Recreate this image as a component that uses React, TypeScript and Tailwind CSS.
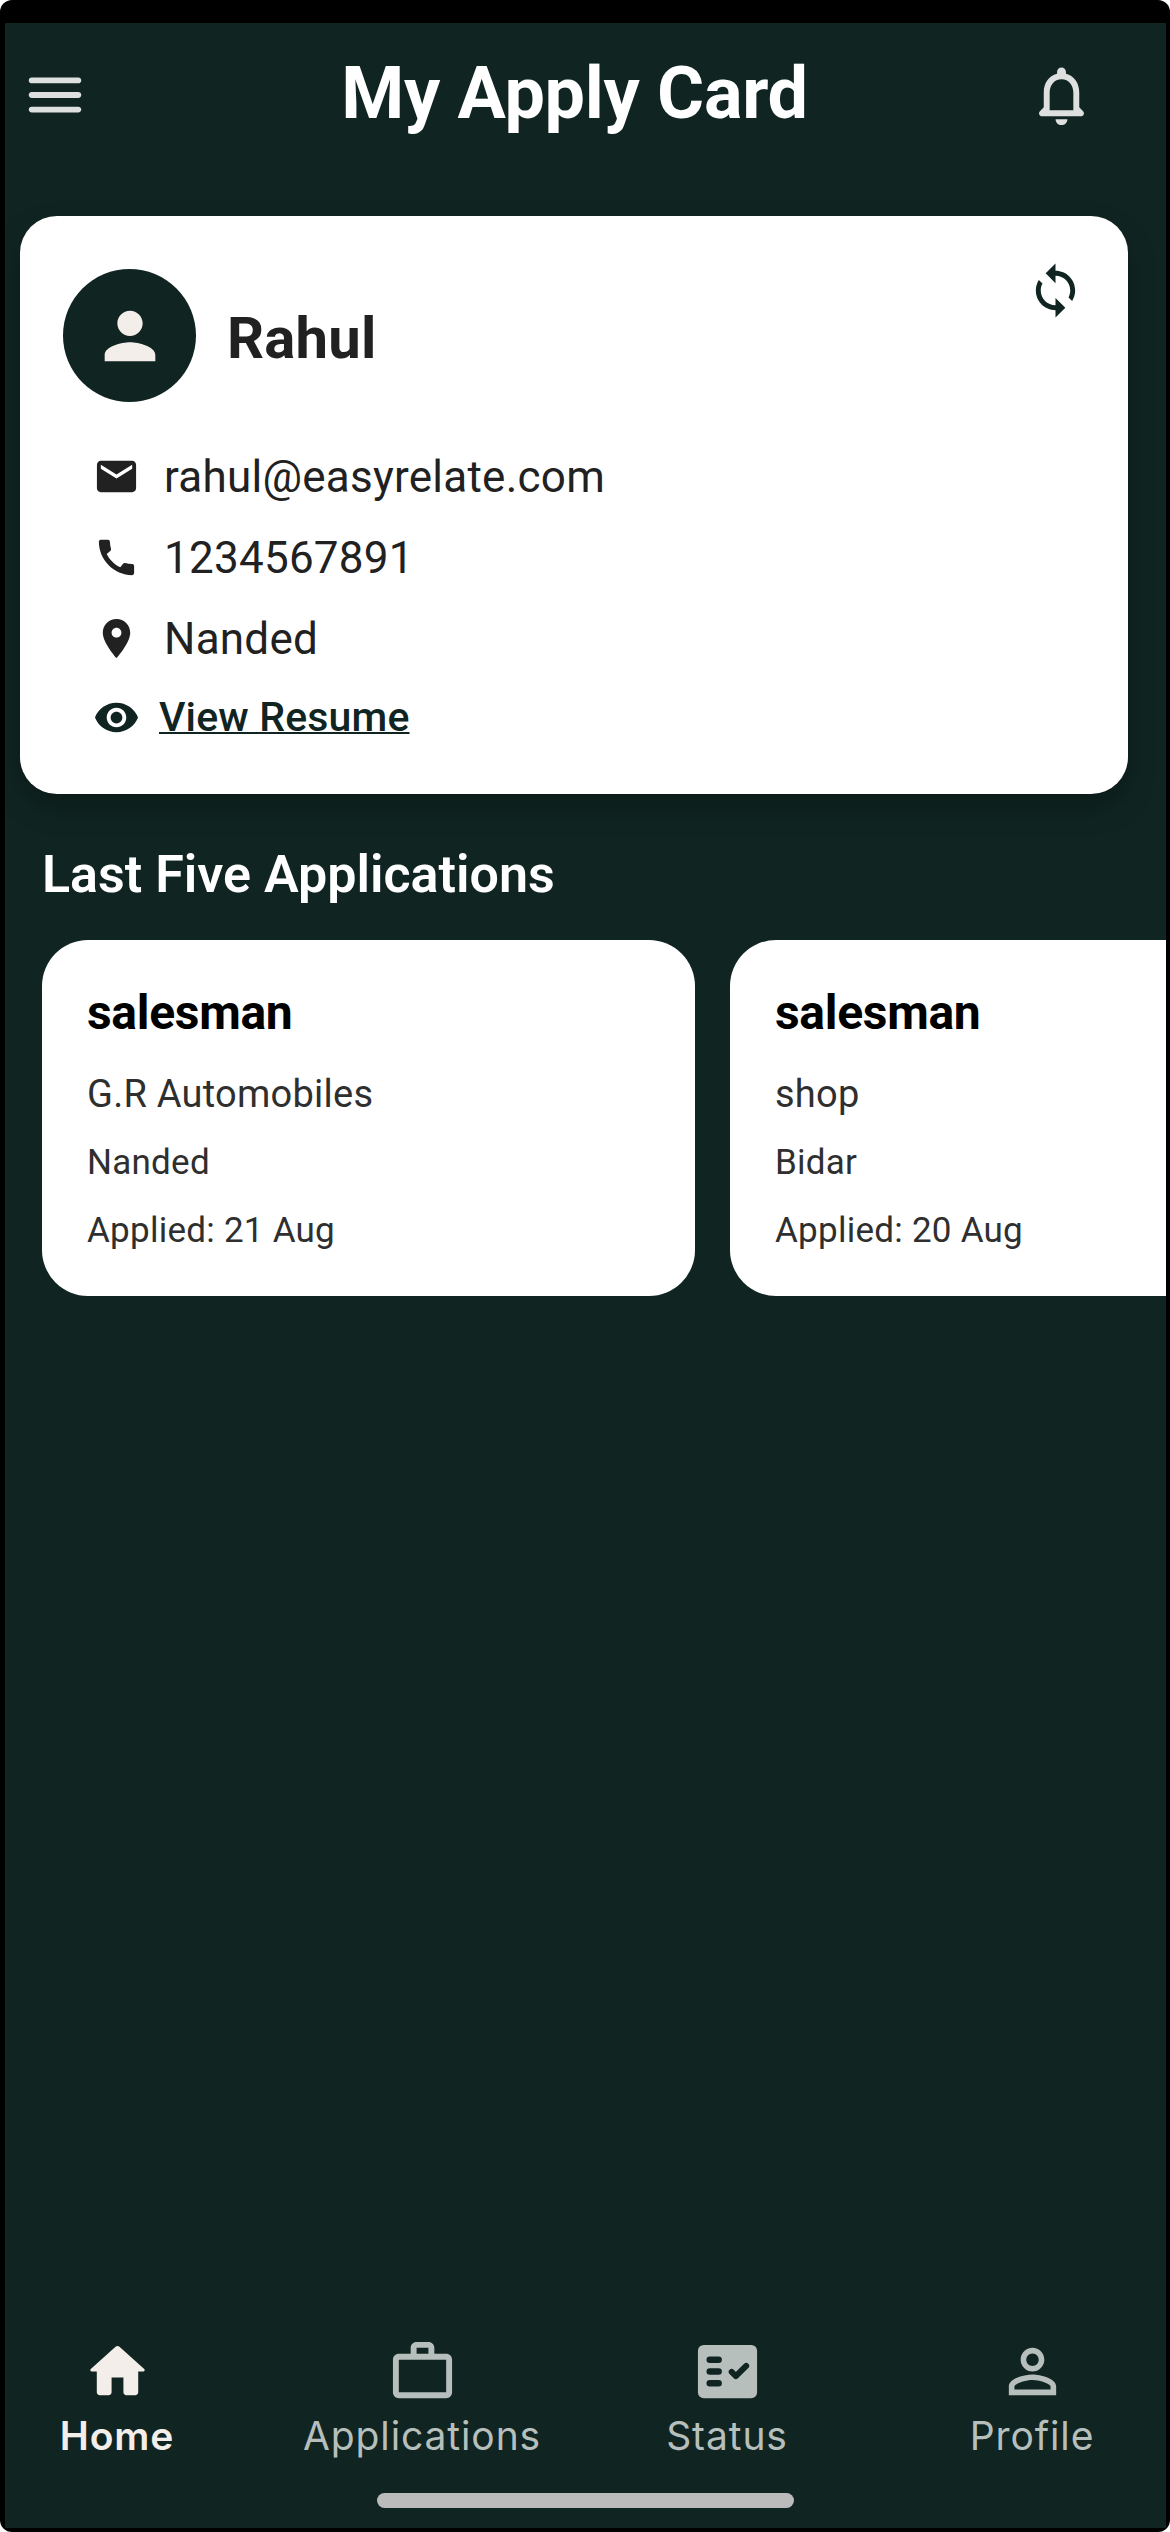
import type { ReactNode } from "react";

type IconProps = {
  className?: string;
  children: ReactNode;
};

type Application = {
  title: string;
  company: string;
  city: string;
  applied: string;
};

const applications: Application[] = [
  { title: "salesman", company: "G.R Automobiles", city: "Nanded", applied: "21 Aug" },
  { title: "salesman", company: "shop", city: "Bidar", applied: "20 Aug" },
];

function Icon({ className = "", children }: IconProps) {
  return (
    <svg viewBox="0 0 24 24" fill="currentColor" className={`shrink-0 ${className}`}>
      {children}
    </svg>
  );
}

function Header() {
  return (
    <header className="flex items-center h-36 pl-[15px]">
      <button aria-label="Menu">
        <Icon className="size-[70px] text-[#dde0df]">
          <path d="M4 18h16c.55 0 1-.45 1-1s-.45-1-1-1H4c-.55 0-1 .45-1 1s.45 1 1 1zm0-5h16c.55 0 1-.45 1-1s-.45-1-1-1H4c-.55 0-1 .45-1 1s.45 1 1 1zM3 7c0 .55.45 1 1 1h16c.55 0 1-.45 1-1s-.45-1-1-1H4c-.55 0-1 .45-1 1z" />
        </Icon>
      </button>

      <h1 className="ml-[33px] w-[903px] -mt-[3px] text-center text-[72px] leading-none font-bold tracking-[-0.3px] text-white">
        My Apply Card
      </h1>

      <button aria-label="Notifications">
        <Icon className="size-[71px] text-[#dde0df]">
          <path d="M19.29 17.29L18 16v-5c0-3.07-1.64-5.64-4.5-6.32V4c0-.83-.67-1.5-1.5-1.5s-1.5.67-1.5 1.5v.68C7.63 5.36 6 7.92 6 11v5l-1.29 1.29c-.63.63-.19 1.71.7 1.71h13.17c.9 0 1.34-1.08.71-1.71zM16 17H8v-6c0-2.48 1.51-4.5 4-4.5s4 2.02 4 4.5v6zm-4 5c1.1 0 2-.9 2-2h-4c0 1.1.89 2 2 2z" />
        </Icon>
      </button>
    </header>
  );
}

function ProfileCard() {
  return (
    <section className="mt-[49px] ml-[15px] flex h-[578px] w-[1108px] shrink-0 justify-between rounded-[37px] bg-white pt-[53px] pl-[43px] pr-[43px] text-[#212121] shadow-[0_14px_28px_rgba(0,0,0,0.28)]">
      <div>
        {/* Avatar + name */}
        <div className="flex items-center gap-[31px]">
          <div className="flex size-[133px] items-center justify-center rounded-full bg-[#102522]">
            <Icon className="size-[76px] text-[#f3eeea]">
              <path d="M12 12c2.21 0 4-1.79 4-4s-1.79-4-4-4-4 1.79-4 4 1.79 4 4 4zm0 2c-2.67 0-8 1.34-8 4v2h16v-2c0-2.66-5.33-4-8-4z" />
            </Icon>
          </div>
          <h2 className="pt-[4px] text-[58px] leading-none font-bold tracking-[0.2px]">Rahul</h2>
        </div>

        {/* Contact details */}
        <ul className="mt-[34px] pl-[30px] text-[44px] leading-none tracking-[0.25px]">
          <li className="flex h-[81px] items-center gap-6">
            <Icon className="size-[47px]">
              <path d="M20 4H4c-1.1 0-1.99.9-1.99 2L2 18c0 1.1.9 2 2 2h16c1.1 0 2-.9 2-2V6c0-1.1-.9-2-2-2zm0 4l-8 5-8-5V6l8 5 8-5v2z" />
            </Icon>
            rahul@easyrelate.com
          </li>
          <li className="flex h-[81px] items-center gap-6">
            <Icon className="size-[47px]">
              <path d="M20.01 15.38c-1.23 0-2.42-.2-3.53-.56-.35-.12-.74-.03-1.01.24l-1.57 1.97c-2.83-1.35-5.48-3.9-6.89-6.83l1.95-1.66c.27-.28.35-.67.24-1.02-.37-1.11-.56-2.3-.56-3.53 0-.54-.45-.99-.99-.99H4.19C3.65 3 3 3.24 3 3.99 3 13.28 10.73 21 20.01 21c.71 0 .99-.63.99-1.18v-3.45c0-.54-.45-.99-.99-.99z" />
            </Icon>
            1234567891
          </li>
          <li className="flex h-[81px] items-center gap-6">
            <Icon className="size-[47px]">
              <path d="M12 2C8.13 2 5 5.13 5 9c0 5.25 7 13 7 13s7-7.75 7-13c0-3.87-3.13-7-7-7zm0 9.5c-1.38 0-2.5-1.12-2.5-2.5s1.12-2.5 2.5-2.5 2.5 1.12 2.5 2.5-1.12 2.5-2.5 2.5z" />
            </Icon>
            Nanded
          </li>
          <li className="flex h-[77px] items-center gap-[19px] text-[#102522]">
            <Icon className="size-[47px]">
              <path d="M12 4.5C7 4.5 2.73 7.61 1 12c1.73 4.39 6 7.5 11 7.5s9.27-3.11 11-7.5c-1.73-4.39-6-7.5-11-7.5zM12 17c-2.76 0-5-2.24-5-5s2.24-5 5-5 5 2.24 5 5-2.24 5-5 5zm0-8c-1.66 0-3 1.34-3 3s1.34 3 3 3 3-1.34 3-3-1.34-3-3-3z" />
            </Icon>
            <a className="text-[41px] font-medium tracking-[0.15px] underline decoration-2 underline-offset-[1px] [text-decoration-skip-ink:none]">
              View Resume
            </a>
          </li>
        </ul>
      </div>

      <button aria-label="Refresh" className="-mt-[8px] self-start">
        <Icon className="size-[59px] text-[#102522]">
          <path d="M12 4V1L8 5l4 4V6c3.31 0 6 2.69 6 6 0 1.01-.25 1.97-.7 2.8l1.46 1.46C19.54 15.03 20 13.57 20 12c0-4.42-3.58-8-8-8zm0 14c-3.31 0-6-2.69-6-6 0-1.01.25-1.97.7-2.8L5.24 7.74C4.46 8.97 4 10.43 4 12c0 4.42 3.58 8 8 8v3l4-4-4-4v3z" />
        </Icon>
      </button>
    </section>
  );
}

function ApplicationCard({ application }: { application: Application }) {
  return (
    <article className="h-[356px] w-[653px] shrink-0 rounded-[46px] bg-white pt-[43px] pl-[45px] text-[35px] leading-[44px] tracking-[0.25px] text-[#2f2f2f]">
      <h3 className="text-[48px] leading-[60px] font-bold tracking-[-0.3px] text-black">{application.title}</h3>
      <p className="mt-7 text-[38px] leading-[46px]">{application.company}</p>
      <p className="mt-6">{application.city}</p>
      <p className="mt-6">Applied: {application.applied}</p>
    </article>
  );
}

function NavItem({ label, active, children }: { label: string; active?: boolean; children: ReactNode }) {
  return (
    <button
      className={`flex w-[220px] shrink-0 flex-col items-center ${
        active ? "font-semibold text-[#f3eeea]" : "text-[#b7bfbd]"
      }`}
    >
      <Icon className="size-[71px]">{children}</Icon>
      <span className="mt-[7px] font-['Inter',sans-serif] text-[39px] leading-[44px] tracking-[0.9px] whitespace-nowrap">
        {label}
      </span>
    </button>
  );
}

function BottomNav() {
  return (
    <nav className="flex gap-[85px] pl-[2px]">
      <NavItem label="Home" active>
        <path d="M10 19v-5h4v5c0 .55.45 1 1 1h3c.55 0 1-.45 1-1v-7h1.7c.46 0 .68-.57.33-.87L12.67 3.6c-.38-.34-.96-.34-1.34 0l-8.36 7.53c-.34.3-.13.87.33.87H5v7c0 .55.45 1 1 1h3c.55 0 1-.45 1-1z" />
      </NavItem>
      <NavItem label="Applications">
        <path d="M14 6V4h-4v2h4zM4 8v11h16V8H4zm16-2c1.11 0 2 .89 2 2v11c0 1.11-.89 2-2 2H4c-1.11 0-2-.89-2-2l.01-11c0-1.11.88-2 1.99-2h4V4c0-1.11.89-2 2-2h4c1.11 0 2 .89 2 2v2h4z" />
      </NavItem>
      <NavItem label="Status">
        <rect x="2" y="3" width="20" height="18" rx="2" />
        <g fill="none" stroke="#102522" strokeWidth="2" strokeLinecap="round" strokeLinejoin="round">
          <path d="M6 8h3M6 12h3M6 16h3" strokeWidth="2.2" />
          <path d="M13.4 12.15l1.42 1.42 3.5-3.5" />
        </g>
      </NavItem>
      <NavItem label="Profile">
        <path d="M12 5.9c1.16 0 2.1.94 2.1 2.1s-.94 2.1-2.1 2.1S9.9 9.16 9.9 8s.94-2.1 2.1-2.1m0 9c2.97 0 6.1 1.46 6.1 2.1v1.1H5.9V17c0-.64 3.13-2.1 6.1-2.1M12 4C9.79 4 8 5.79 8 8s1.79 4 4 4 4-1.79 4-4-1.79-4-4-4zm0 9c-2.67 0-8 1.34-8 4v3h16v-3c0-2.66-5.33-4-8-4z" />
      </NavItem>
    </nav>
  );
}

export default function App() {
  return (
    <div className="h-[2532px] w-[1170px] bg-white font-['Roboto',sans-serif]">
      {/* Phone bezel */}
      <div className="flex h-full flex-col rounded-[12px] bg-black pt-[23px] pr-1 pb-1 pl-[5px]">
        <div className="flex flex-1 flex-col overflow-hidden bg-[#102522]">
          <Header />
          <ProfileCard />

          <h2 className="mt-[44px] pl-[37px] text-[52px] leading-[73px] font-semibold text-white">
            Last Five Applications
          </h2>
          <div className="mt-[29px] flex gap-[35px] pl-[37px]">
            {applications.map((application) => (
              <ApplicationCard key={application.company} application={application} />
            ))}
          </div>

          {/* Navigation and home indicator */}
          <div className="mt-auto flex flex-col pb-5">
            <BottomNav />
            <div className="mt-[35px] ml-[372px] h-[15px] w-[417px] rounded-full bg-[#babbba]" />
          </div>
        </div>
      </div>
    </div>
  );
}
